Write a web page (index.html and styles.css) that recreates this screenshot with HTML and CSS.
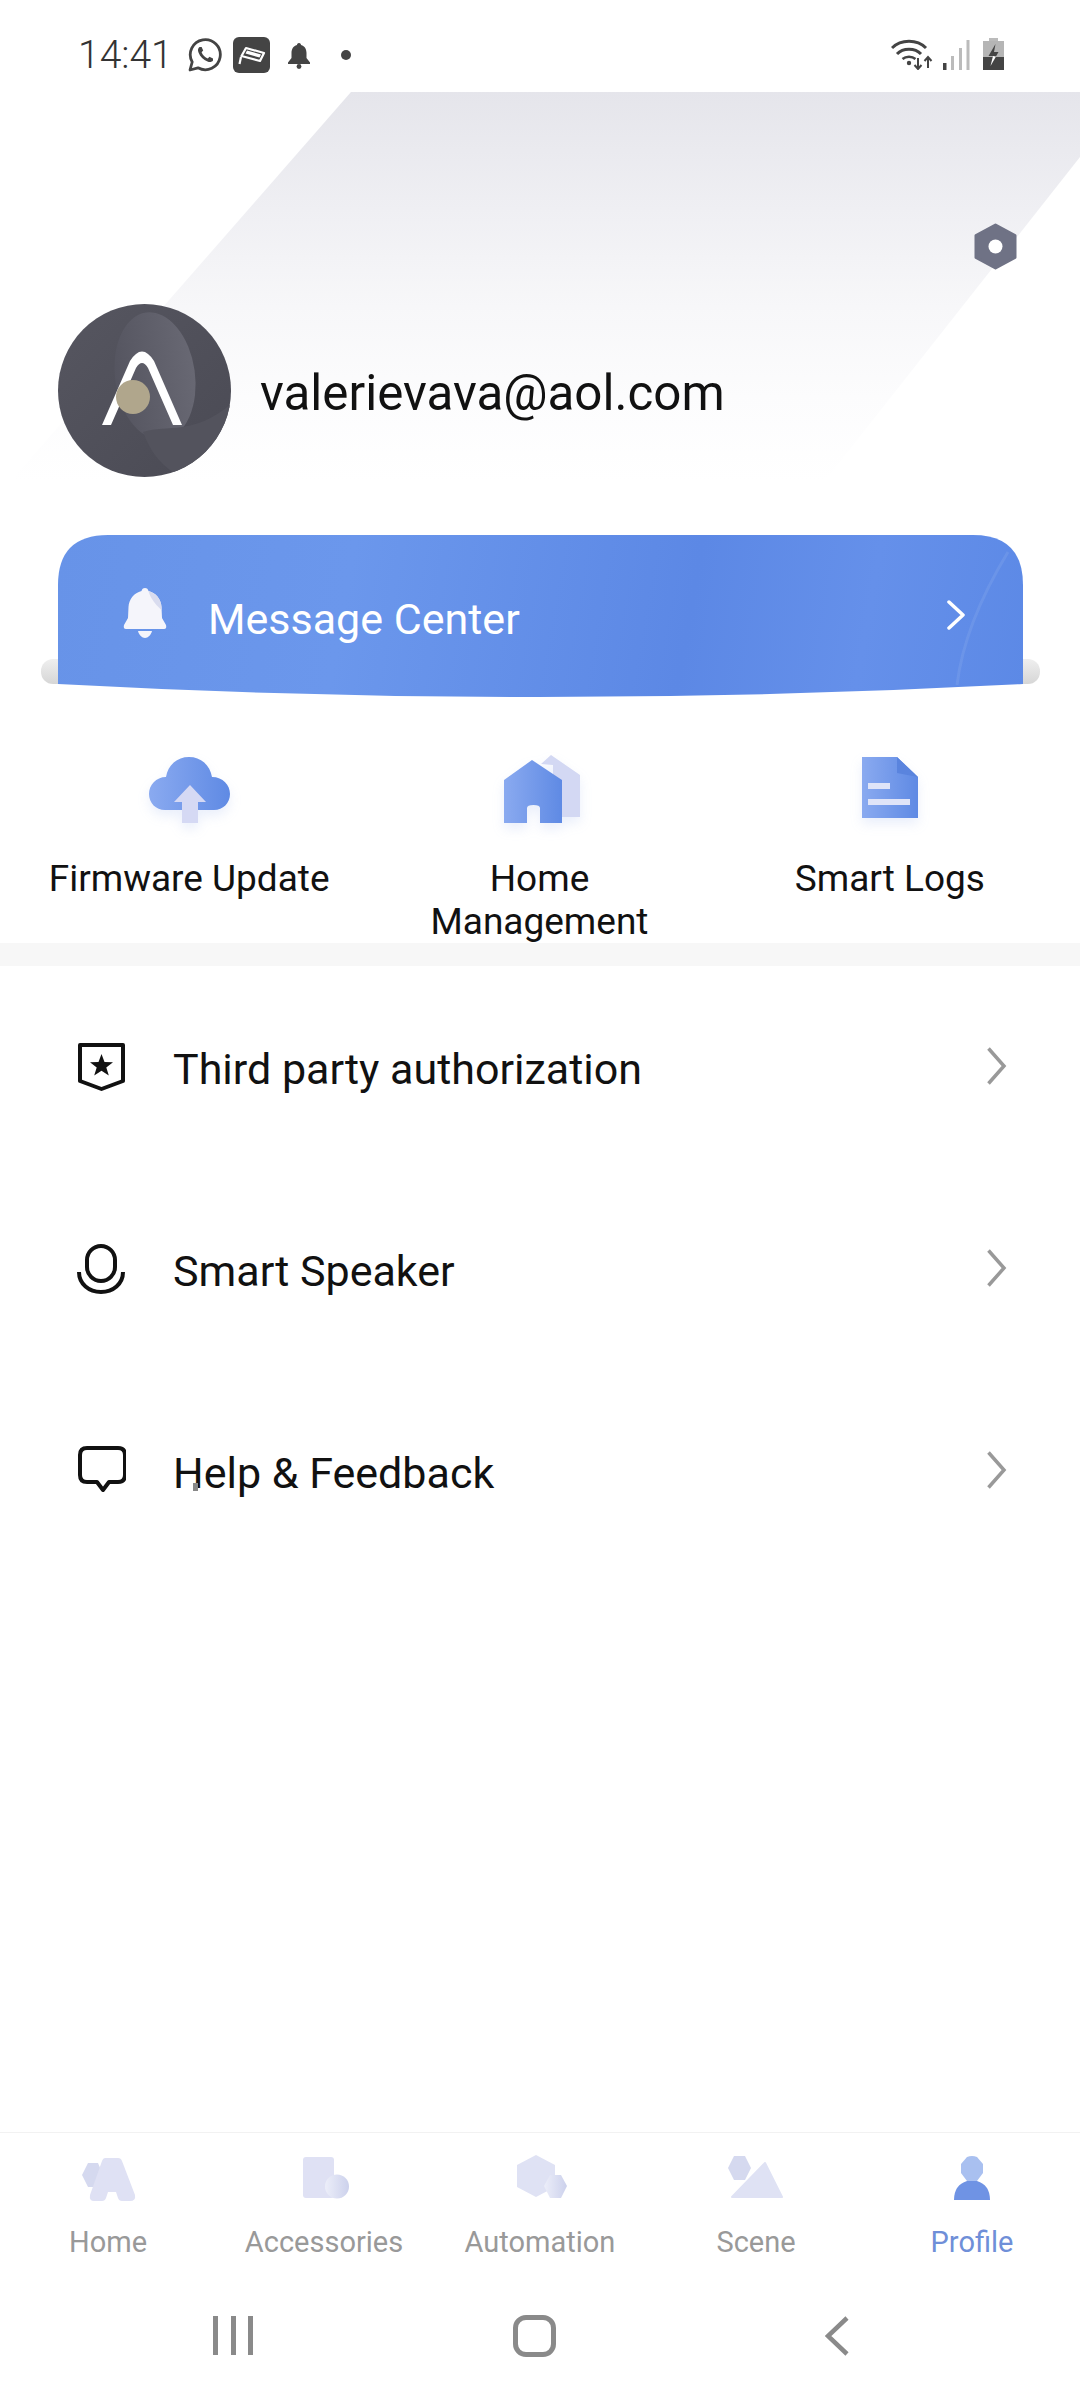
FILE: index.html
```html
<!DOCTYPE html>
<html lang="en">
<head>
    <meta charset="UTF-8">
    <title>Profile</title>
    <link rel="stylesheet" href="styles.css">
</head>
<body>
    <div class="page">
        <div class="hero-bg"></div>

        <!-- Status bar -->
        <div class="status-bar">
            <div class="status-left">
                <span class="status-time">14:41</span>
                <svg class="ic-whatsapp" viewBox="0 0 34 34">
                    <path d="M2 32 L4.200 24 A15 15 0 1 1 10 29.800 Z" fill="none" stroke="#444" stroke-width="2.800" stroke-linejoin="round"/>
                    <path d="M11.500 9 C10 10 9.500 12 10.500 14.500 C12 18.500 15.500 22 19.500 23.500 C22 24.500 24 24 25 22.500 L25 20.500 L21.500 18.800 L19.800 20.500 C17.200 19.500 14.500 16.800 13.600 14.200 L15.200 12.500 L13.600 9 Z" fill="#444"/>
                </svg>
                <span class="cam-badge">
                    <svg viewBox="0 0 37 36">
                        <path d="M13 11 L31 16 L27 24 L8.500 19 Z" fill="none" stroke="#fff" stroke-width="2.200" stroke-linejoin="round"/>
                        <path d="M14 13.500 L28 17.500 L26.500 20.500 L12.500 16.500 Z" fill="#fff"/>
                        <path d="M8 20 L6.500 27" stroke="#fff" stroke-width="2.200"/>
                    </svg>
                </span>
                <svg class="ic-bell-small" viewBox="0 0 24 27">
                    <path d="M12 1 C13.500 1 14 2 14 3 C18 4 19.500 7.500 19.500 11 L19.500 16 L23 20.500 L23 22 L1 22 L1 20.500 L4.500 16 L4.500 11 C4.500 7.500 6 4 10 3 C10 2 10.500 1 12 1 Z" fill="#444"/>
                    <circle cx="12" cy="24.500" r="2.400" fill="#444"/>
                </svg>
                <span class="status-dot"></span>
            </div>
            <div class="status-right">
                <svg class="ic-wifi" viewBox="0 0 42 32">
                    <path d="M1 10 C10 1 26 1 35 10" fill="none" stroke="#444" stroke-width="3"/>
                    <path d="M6 16 C12 9.500 24 9.500 30 16" fill="none" stroke="#444" stroke-width="3"/>
                    <path d="M11.500 21 C15 18 21 18 24.500 21" fill="none" stroke="#444" stroke-width="2.500"/>
                    <circle cx="18" cy="25" r="2.200" fill="#444"/>
                    <path d="M27 20 V31 M23.500 27 L27 31 L30.500 27" fill="none" stroke="#444" stroke-width="2"/>
                    <path d="M37 30 V19 M33.500 23 L37 19 L40.500 23" fill="none" stroke="#444" stroke-width="2"/>
                </svg>
                <svg class="ic-signal" viewBox="0 0 28 30">
                    <rect x="1" y="23" width="3.500" height="7" fill="#444"/>
                    <rect x="9" y="16" width="3" height="14" fill="#bbb"/>
                    <rect x="17" y="8" width="3" height="22" fill="#bbb"/>
                    <rect x="24.500" y="0" width="3" height="30" fill="#bbb"/>
                </svg>
                <svg class="ic-battery" viewBox="0 0 21 32">
                    <rect x="6" y="0" width="9" height="4" fill="#bbb"/>
                    <rect x="0" y="3" width="21" height="16" fill="#b5b5b5"/>
                    <rect x="0" y="19" width="21" height="13" fill="#444"/>
                    <path d="M12.500 6 L5.500 18 L10 18 L7.500 28 L15.500 14 L11 14 Z" fill="#444"/>
                    <path d="M10 18 L7.500 28 L13 18.500 Z" fill="#fff"/>
                </svg>
            </div>
        </div>

        <!-- Account header -->
        <div class="settings-row">
            <svg class="ic-settings" viewBox="0 0 43 47">
                <path d="M21.500 2 L41 12.500 V34.500 L21.500 45 L2 34.500 V12.500 Z" fill="#6f7285" stroke="#6f7285" stroke-width="3" stroke-linejoin="round"/>
                <circle cx="21.500" cy="23.500" r="7" fill="#fff"/>
            </svg>
        </div>

        <div class="account-row">
            <svg class="avatar" viewBox="0 0 173 173">
                <defs>
                    <linearGradient id="avatarGrad" x1="0" y1="0" x2="1" y2="1">
                        <stop offset="0" stop-color="#565660"/>
                        <stop offset="1" stop-color="#4a4a54"/>
                    </linearGradient>
                    <linearGradient id="avatarSheen" x1="0" y1="0" x2="1" y2="0">
                        <stop offset="0" stop-color="#555560"/>
                        <stop offset="1" stop-color="#686873"/>
                    </linearGradient>
                    <clipPath id="avatarClip"><circle cx="86.500" cy="86.500" r="86.500"/></clipPath>
                </defs>
                <circle cx="86.500" cy="86.500" r="86.500" fill="url(#avatarGrad)"/>
                <g clip-path="url(#avatarClip)">
                    <ellipse cx="97" cy="72" rx="40" ry="64" fill="url(#avatarSheen)" transform="rotate(-8 97 72)"/>
                    <path d="M85 128 C110 120 135 132 173 100 L173 173 H125 C105 165 92 148 85 128 Z" fill="#53535d"/>
                </g>
                <path d="M44 121 L72 57 Q84 38 96 57 L124 121 H115 L90 64 Q84 54 78 64 L53 121 Z" fill="#fff"/>
                <circle cx="75" cy="93" r="17" fill="#b0a68c"/>
            </svg>
            <span class="account-email">valerievava@aol.com</span>
        </div>

        <!-- Message center -->
        <div class="message-wrap">
            <div class="message-card">
                <svg class="card-arc" viewBox="0 0 965 162">
                    <path d="M950 17 C930 50 905 100 899 150" fill="none" stroke="#fff" stroke-opacity="0.08" stroke-width="3"/>
                </svg>
                <svg class="ic-bell" viewBox="0 0 44 50">
                    <path d="M22 0 C24 0 25 1 25.500 3 C33 5 38 11 38.500 19 L39 30 L43 37 Q44 41 41 41 H3 Q0 41 1 37 L5 30 L5.500 19 C6 11 11 5 18.500 3 C19 1 20 0 22 0 Z" fill="#f5f5fb"/>
                    <path d="M25.500 3 C33 5 38 11 38.500 19 L38.500 22 C33 17 27 10 25.500 3 Z" fill="#d9dcef"/>
                    <path d="M15 43 H29 C28 47 25 50 22 50 C19 50 16 47 15 43 Z" fill="#f5f5fb"/>
                </svg>
                <span class="message-title">Message Center</span>
                <svg class="ic-chevron-white" viewBox="0 0 18 30">
                    <path d="M2 2 L16 15 L2 28" fill="none" stroke="#fff" stroke-width="3.500" stroke-linecap="round" stroke-linejoin="round"/>
                </svg>
            </div>
        </div>

        <!-- Shortcuts -->
        <div class="shortcuts">
            <div class="shortcut">
                <div class="shortcut-icon">
                    <svg class="ic-cloud" viewBox="0 0 81 68">
                        <defs>
                            <linearGradient id="blueGrad" x1="0" y1="0" x2="1" y2="0">
                                <stop offset="0" stop-color="#8aaaf0"/>
                                <stop offset="1" stop-color="#5f8ae4"/>
                            </linearGradient>
                        </defs>
                        <path d="M16 53 C7 53 0 46 0 37 C0 28 7 20 17 20 C19 8 28 0 40 0 C52 0 61 8 63 20 C74 20 81 28 81 37 C81 46 74 53 65 53 Z" fill="url(#blueGrad)"/>
                        <path d="M41 28 L57 45 H49 V66 H33 V45 H25 Z" fill="#d5d9f4"/>
                    </svg>
                </div>
                <div class="shortcut-label">Firmware Update</div>
            </div>
            <div class="shortcut">
                <div class="shortcut-icon">
                    <svg class="ic-home" viewBox="0 0 78 68">
                        <path d="M48 0 L77 20 V62 H50 V10 L38 9 Z" fill="#d3d8f3"/>
                        <path d="M29 5 L59 25 V68 H37 V53 Q37 50 30.500 50 Q24 50 24 53 V68 H1 V25 Z" fill="url(#blueGrad)"/>
                    </svg>
                </div>
                <div class="shortcut-label">Home Management</div>
            </div>
            <div class="shortcut">
                <div class="shortcut-icon">
                    <svg class="ic-logs" viewBox="0 0 56 62">
                        <path d="M0 0 H35 L56 20 V61 H0 Z" fill="url(#blueGrad)"/>
                        <path d="M35 0 L56 20 L35 16 Z" fill="#5a84de"/>
                        <rect x="6" y="26" width="22" height="6" fill="#dfe4f8"/>
                        <rect x="6" y="42" width="42" height="6" fill="#dfe4f8"/>
                    </svg>
                </div>
                <div class="shortcut-label">Smart Logs</div>
            </div>
        </div>

        <div class="band"></div>

        <!-- Settings list -->
        <div class="menu">
            <div class="menu-row">
                <span class="menu-icon">
                    <svg viewBox="0 0 50 50">
                        <path d="M4 3 H47 V39 L25.500 47 L4 39 Z" fill="none" stroke="#111" stroke-width="4" stroke-linejoin="round"/>
                        <path d="M25.500 12 L28.500 20 L37 20.300 L30.300 25.500 L32.800 33.500 L25.500 28.800 L18.200 33.500 L20.700 25.500 L14 20.300 L22.500 20 Z" fill="#111"/>
                    </svg>
                </span>
                <span class="menu-text">Third party authorization</span>
                <svg class="ic-chevron" viewBox="0 0 21 40">
                    <path d="M2.500 2.500 L18 20 L2.500 37.500" fill="none" stroke="#999" stroke-width="3.500"/>
                </svg>
            </div>
            <div class="menu-row">
                <span class="menu-icon">
                    <svg viewBox="0 0 50 50">
                        <rect x="11" y="2" width="28" height="35" rx="14" fill="none" stroke="#111" stroke-width="4"/>
                        <path d="M3 28 C3 40 13 48 25 48 C37 48 47 40 47 28" fill="none" stroke="#111" stroke-width="4"/>
                    </svg>
                </span>
                <span class="menu-text">Smart Speaker</span>
                <svg class="ic-chevron" viewBox="0 0 21 40">
                    <path d="M2.500 2.500 L18 20 L2.500 37.500" fill="none" stroke="#999" stroke-width="3.500"/>
                </svg>
            </div>
            <div class="menu-row">
                <span class="menu-icon">
                    <svg viewBox="0 0 50 50">
                        <path d="M11 2 H42 Q49 2 49 9 V29 Q49 36 42 36 H33 L27 44 L21 36 H11 Q4 36 4 29 V9 Q4 2 11 2 Z" fill="none" stroke="#111" stroke-width="4" stroke-linejoin="round"/>
                    </svg>
                </span>
                <span class="menu-text">Help &amp; Feedback</span>
                <svg class="ic-chevron" viewBox="0 0 21 40">
                    <path d="M2.500 2.500 L18 20 L2.500 37.500" fill="none" stroke="#999" stroke-width="3.500"/>
                </svg>
                <span class="text-cursor"></span>
            </div>
        </div>

        <!-- Tab bar -->
        <div class="tab-bar">
            <div class="tab">
                <svg class="tab-icon" viewBox="0 0 60 48">
                    <defs>
                        <linearGradient id="paleGrad" x1="0" y1="0" x2="1" y2="0">
                            <stop offset="0" stop-color="#eceef9"/>
                            <stop offset="1" stop-color="#ccd1ec"/>
                        </linearGradient>
                    </defs>
                    <path d="M10 8 L20 8 L25 20 L20 32 L10 32 L4 20 Z" fill="#d5d9ef"/>
                    <path d="M27 3 H40 Q43 3 44 6 L57 40 Q58 46 52 46 H44 Q41 46 40 43 L38 37 H30 L28 43 Q27 46 24 46 H16 Q11 46 12 40 L24 6 Q25 3 27 3 Z" fill="#dfe1f4"/>
                </svg>
                <span class="tab-label">Home</span>
            </div>
            <div class="tab">
                <svg class="tab-icon" viewBox="0 0 60 48">
                    <rect x="9" y="2" width="31" height="41" rx="3" fill="#dfe1f4"/>
                    <circle cx="43" cy="31.500" r="12" fill="url(#paleGrad)"/>
                </svg>
                <span class="tab-label">Accessories</span>
            </div>
            <div class="tab">
                <svg class="tab-icon" viewBox="0 0 60 48">
                    <path d="M26 0 L45 10 V32 L26 42 L7 32 V10 Z" fill="#dfe2f4"/>
                    <path d="M40 20 L51 20 L57 31 L51 43 L40 43 L34 31 Z" fill="url(#paleGrad)"/>
                </svg>
                <span class="tab-label">Automation</span>
            </div>
            <div class="tab">
                <svg class="tab-icon" viewBox="0 0 60 48">
                    <path d="M8 1 L19 1 L25 13 L19 25 L8 25 L2 13 Z" fill="#d5d9ef"/>
                    <path d="M39 8 L56 42 H6 Z" fill="#dfe2f4" stroke="#dfe2f4" stroke-width="2" stroke-linejoin="round"/>
                </svg>
                <span class="tab-label">Scene</span>
            </div>
            <div class="tab tab-active">
                <svg class="tab-icon" viewBox="0 0 60 48">
                    <path d="M25 2 Q30 0 35 2 L41 9 V18 L35 26 H25 L19 18 V9 Z" fill="#a9c0f0"/>
                    <path d="M25 26 H35 Q48 30 48 45 H12 Q12 30 25 26 Z" fill="#6f93e4"/>
                </svg>
                <span class="tab-label">Profile</span>
            </div>
        </div>

        <!-- Android nav -->
        <div class="nav-bar">
            <div class="nav-recents"><span></span><span></span><span></span></div>
            <div class="nav-home"></div>
            <svg class="nav-back" viewBox="0 0 24 40">
                <path d="M22 2 L3 20 L22 38" fill="none" stroke="#8a8a8a" stroke-width="4.500"/>
            </svg>
        </div>
    </div>
</body>
</html>
```

FILE: styles.css
```css
* {
    box-sizing: border-box;
}

body {
    margin: 0;
    background: white;
    font-family: Roboto, "Liberation Sans", sans-serif;
    color: #111;
}

.page {
    position: relative;
    width: 1080px;
    height: 2400px;
    display: flex;
    flex-direction: column;
    overflow: hidden;
    background: white;
}

.hero-bg {
    position: absolute;
    left: 0;
    top: 92px;
    width: 1080px;
    height: 390px;
    background: linear-gradient(180deg, #e5e5eb 0%, #efeff3 30%, #f7f7f9 55%, #fcfcfd 78%, #ffffff 100%);
    clip-path: polygon(351px 0, 1080px 0, 1080px 65px, 824px 390px, 10px 390px);
}

/* status bar */
.status-bar {
    position: relative;
    height: 110px;
    padding: 38px 76px 0 78px;
    display: flex;
    justify-content: space-between;
}

.status-left,
.status-right {
    display: flex;
    align-items: flex-start;
}

.status-time {
    font-size: 39px;
    font-weight: 300;
    line-height: 34px;
    color: #333;
    width: 110px;
}

.ic-whatsapp {
    width: 34px;
    height: 34px;
}

.cam-badge {
    width: 37px;
    height: 36px;
    margin-left: 11px;
    margin-top: -1px;
    border-radius: 6px;
    background: #444;
    display: flex;
}

.ic-bell-small {
    width: 24px;
    height: 27px;
    margin: 4px 0 0 17px;
}

.status-dot {
    width: 10px;
    height: 10px;
    margin: 12px 0 0 30px;
    border-radius: 50%;
    background: #444;
}

.ic-wifi {
    width: 42px;
    height: 32px;
}

.ic-signal {
    width: 28px;
    height: 30px;
    margin: 2px 0 0 9px;
}

.ic-battery {
    width: 21px;
    height: 32px;
    margin-left: 13px;
}

/* account header */
.settings-row {
    position: relative;
    margin-top: 113px;
    padding-right: 63px;
    display: flex;
    justify-content: flex-end;
}

.ic-settings {
    width: 43px;
    height: 47px;
}

.account-row {
    position: relative;
    margin-top: 34px;
    padding-left: 58px;
    display: flex;
    align-items: center;
    gap: 29px;
}

.avatar {
    width: 173px;
    height: 173px;
    flex-shrink: 0;
}

.account-email {
    padding-top: 5px;
    font-size: 49.3px;
    color: #111;
}

/* blue card */
.message-wrap {
    position: relative;
    margin: 58px 40px 0 41px;
    height: 162px;
}

.message-wrap::before {
    content: "";
    position: absolute;
    left: 0;
    right: 0;
    top: 124px;
    height: 25px;
    border-radius: 12px;
    background: linear-gradient(180deg, #efefef, #d6d6d6);
}

.message-card {
    position: absolute;
    left: 17px;
    right: 17px;
    top: 0;
    bottom: 0;
    padding: 0 58px 0 65px;
    display: flex;
    align-items: center;
    background: linear-gradient(100deg, #6793e8 0%, #6b97ec 30%, #5c88e5 65%, #6590ea 83%, #5c89e6 100%);
    clip-path: path("M0 50 Q0 0 50 0 H915 Q965 0 965 50 V149 Q482 175 0 149 Z");
}

.card-arc {
    position: absolute;
    left: 0;
    top: 0;
    width: 965px;
    height: 162px;
}

.ic-bell {
    position: relative;
    width: 44px;
    height: 50px;
    margin-top: -6px;
    flex-shrink: 0;
}

.message-title {
    position: relative;
    flex: 1;
    margin-left: 41px;
    padding-top: 5px;
    font-size: 43px;
    color: white;
}

.ic-chevron-white {
    position: relative;
    width: 18px;
    height: 30px;
    margin-top: -3px;
}

/* shortcuts */
.shortcuts {
    margin-top: 58px;
    padding: 0 15px 0 14px;
    display: grid;
    grid-template-columns: repeat(3, 1fr);
    height: 188px;
}

.shortcut {
    display: flex;
    flex-direction: column;
    align-items: center;
}

.shortcut-icon {
    height: 70px;
    display: flex;
    justify-content: center;
}

.ic-cloud {
    width: 81px;
    height: 68px;
    margin-top: 2px;
    filter: drop-shadow(0 6px 6px rgba(111, 147, 228, 0.15));
}

.ic-home {
    width: 78px;
    height: 68px;
    margin-left: 6px;
    filter: drop-shadow(0 6px 6px rgba(111, 147, 228, 0.15));
}

.ic-logs {
    width: 56px;
    height: 62px;
    margin-top: 2px;
    filter: drop-shadow(0 6px 6px rgba(111, 147, 228, 0.15));
}

.shortcut-label {
    margin-top: 32px;
    max-width: 290px;
    font-size: 37px;
    line-height: 43px;
    text-align: center;
    color: #111;
}

.band {
    height: 23px;
    background: #f7f7f7;
}

/* list */
.menu {
    flex: 1;
}

.menu-row {
    position: relative;
    height: 202px;
    padding: 0 73px 0 76px;
    display: flex;
    align-items: center;
}

.menu-icon {
    width: 50px;
    height: 50px;
    display: flex;
}

.menu-text {
    flex: 1;
    margin-left: 47px;
    padding-top: 4px;
    font-size: 43px;
    color: #111;
}

.ic-chevron {
    width: 21px;
    height: 40px;
    margin-top: -2px;
}

.text-cursor {
    position: absolute;
    left: 193px;
    top: 113px;
    width: 5px;
    height: 8px;
    background: #888;
}

/* tab bar */
.tab-bar {
    height: 140px;
    padding-top: 22px;
    border-top: 1px solid #f2f2f2;
    display: grid;
    grid-template-columns: repeat(5, 1fr);
}

.tab {
    display: flex;
    flex-direction: column;
    align-items: center;
}

.tab-icon {
    width: 60px;
    height: 48px;
}

.tab-label {
    margin-top: 22px;
    font-size: 29px;
    line-height: 34px;
    color: #999;
}

.tab-active .tab-label {
    color: #6f8fd8;
}

/* android navigation */
.nav-bar {
    height: 128px;
    padding: 44px 0 0 213px;
    display: flex;
    align-items: flex-start;
}

.nav-recents {
    width: 40px;
    height: 39px;
    display: flex;
    justify-content: space-between;
}

.nav-recents span {
    width: 5px;
    background: #8a8a8a;
}

.nav-home {
    width: 43px;
    height: 42px;
    margin-top: -1px;
    margin-left: 260px;
    border: 5px solid #8a8a8a;
    border-radius: 13px;
}

.nav-back {
    width: 24px;
    height: 40px;
    margin-left: 269px;
}
```
